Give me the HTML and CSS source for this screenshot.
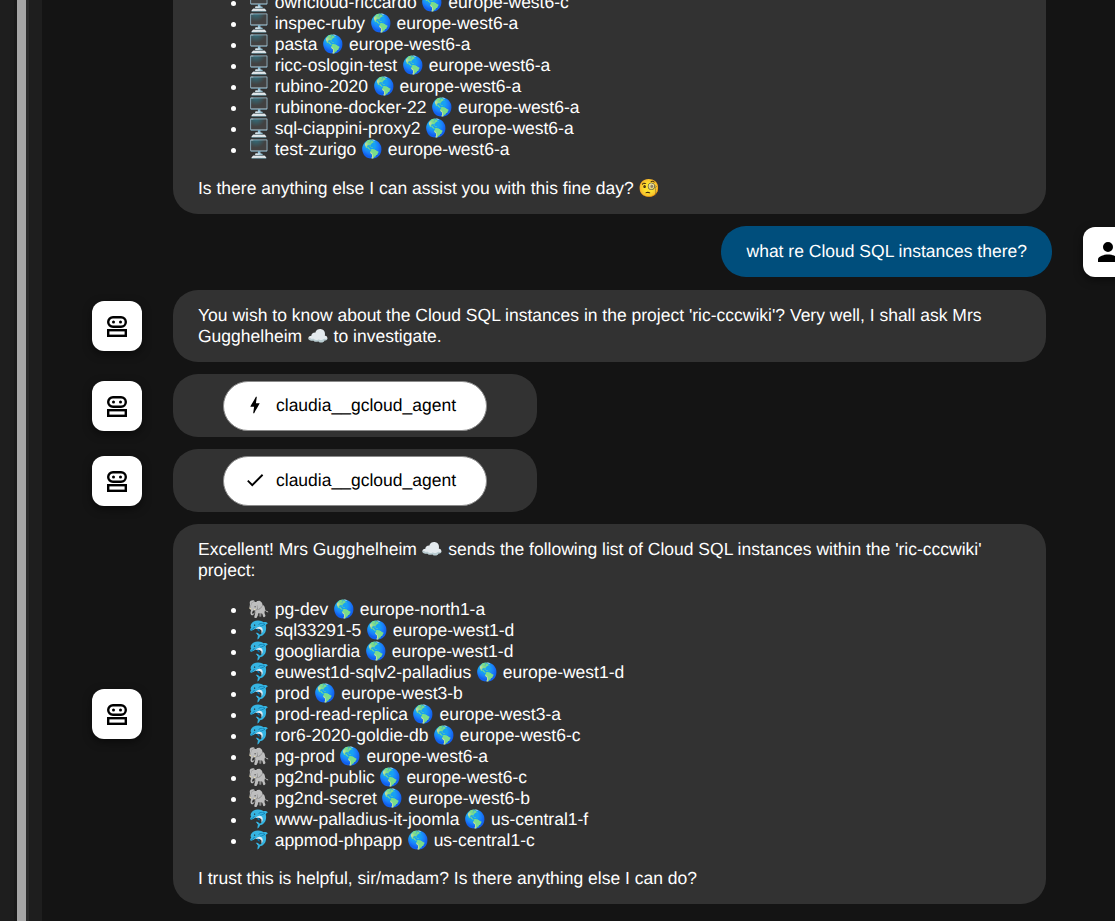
FILE: index.html
```html
<!DOCTYPE html>
<html lang="en">
<head>
  <meta charset="UTF-8">
  <meta name="viewport" content="width=device-width, initial-scale=1.0">
  <title>Chat</title>
  <link rel="stylesheet" href="styles.css">
</head>
<body>
  <svg class="icon-defs" width="0" height="0">
    <symbol id="robot" viewBox="0 0 24 24">
      <rect x="3.200" y="3.200" width="17.600" height="9.600" rx="4.800" fill="none" stroke="#000" stroke-width="2.400"/>
      <circle cx="8.500" cy="8" r="1.500"/><circle cx="15.500" cy="8" r="1.500"/>
      <rect x="3.200" y="16.200" width="17.600" height="5.600" fill="none" stroke="#000" stroke-width="2.400"/>
    </symbol>
  </svg>

  <div class="app">
    <div class="sidebar"><div class="scrollbar"></div></div>
    <div class="chat">

      <div class="row">
        <div class="avatar"><svg class="robot"><use href="#robot"/></svg></div>
        <div class="bubble bubble-long">
          <ul>
            <li>🖥️ owncloud-riccardo 🌎 europe-west6-c</li>
            <li>🖥️ inspec-ruby 🌎 europe-west6-a</li>
            <li>🖥️ pasta 🌎 europe-west6-a</li>
            <li>🖥️ ricc-oslogin-test 🌎 europe-west6-a</li>
            <li>🖥️ rubino-2020 🌎 europe-west6-a</li>
            <li>🖥️ rubinone-docker-22 🌎 europe-west6-a</li>
            <li>🖥️ sql-ciappini-proxy2 🌎 europe-west6-a</li>
            <li>🖥️ test-zurigo 🌎 europe-west6-a</li>
          </ul>
          <p>Is there anything else I can assist you with this fine day? 🧐</p>
        </div>
      </div>

      <div class="row row-user">
        <div class="bubble bubble-user">what re Cloud SQL instances there?</div>
        <div class="avatar">
          <svg viewBox="0 0 24 24" class="person"><path d="M12 12a4 4 0 1 0 0-8 4 4 0 0 0 0 8zm0 2c-2.700 0-8 1.300-8 4v2h16v-2c0-2.700-5.300-4-8-4z"/></svg>
        </div>
      </div>

      <div class="row">
        <div class="avatar"><svg class="robot"><use href="#robot"/></svg></div>
        <div class="bubble">
          <p>You wish to know about the Cloud SQL instances in the project 'ric-cccwiki'? Very well, I shall ask Mrs Gugghelheim ☁️ to investigate.</p>
        </div>
      </div>

      <div class="row">
        <div class="avatar"><svg class="robot"><use href="#robot"/></svg></div>
        <div class="bubble bubble-tool">
          <div class="chip">
            <svg viewBox="0 0 24 24" class="chip-icon"><path d="M11 21h-1l1-7H7.500c-.58 0-.57-.32-.38-.66.19-.34.05-.08.07-.12C8.480 10.940 10.420 7.540 13 3h1l-1 7h3.500c.49 0 .56.33.47.51l-.07.15C12.960 17.550 11 21 11 21z"/></svg>
            <span>claudia__gcloud_agent</span>
          </div>
        </div>
      </div>

      <div class="row">
        <div class="avatar"><svg class="robot"><use href="#robot"/></svg></div>
        <div class="bubble bubble-tool">
          <div class="chip">
            <svg viewBox="0 0 24 24" class="chip-icon"><path d="M9 16.170 4.830 12l-1.420 1.410L9 19 21 7l-1.410-1.410z"/></svg>
            <span>claudia__gcloud_agent</span>
          </div>
        </div>
      </div>

      <div class="row">
        <div class="avatar"><svg class="robot"><use href="#robot"/></svg></div>
        <div class="bubble">
          <p>Excellent! Mrs Gugghelheim ☁️ sends the following list of Cloud SQL instances within the 'ric-cccwiki' project:</p>
          <ul>
            <li>🐘 pg-dev 🌎 europe-north1-a</li>
            <li>🐬 sql33291-5 🌎 europe-west1-d</li>
            <li>🐬 googliardia 🌎 europe-west1-d</li>
            <li>🐬 euwest1d-sqlv2-palladius 🌎 europe-west1-d</li>
            <li>🐬 prod 🌎 europe-west3-b</li>
            <li>🐬 prod-read-replica 🌎 europe-west3-a</li>
            <li>🐬 ror6-2020-goldie-db 🌎 europe-west6-c</li>
            <li>🐘 pg-prod 🌎 europe-west6-a</li>
            <li>🐘 pg2nd-public 🌎 europe-west6-c</li>
            <li>🐘 pg2nd-secret 🌎 europe-west6-b</li>
            <li>🐬 www-palladius-it-joomla 🌎 us-central1-f</li>
            <li>🐬 appmod-phpapp 🌎 us-central1-c</li>
          </ul>
          <p>I trust this is helpful, sir/madam? Is there anything else I can do?</p>
        </div>
      </div>

    </div>
  </div>
</body>
</html>
```

FILE: styles.css
```css
html, body {
  margin: 0;
  height: 100%;
  overflow: hidden;
  background-color: #141414;
}
body {
  font-family: "Liberation Sans", Arial, sans-serif;
  font-size: 17.5px;
  line-height: 21px;
  color: #fff;
  text-rendering: geometricPrecision;
}
.icon-defs {
  position: absolute;
}
.app {
  display: flex;
  height: 100vh;
}
.sidebar {
  flex: 0 0 42px;
  box-sizing: border-box;
  padding-left: 14px;
  background-color: #1e1e1e;
}
.scrollbar {
  width: 15px;
  height: 100%;
  box-sizing: border-box;
  background-color: #a6a6a6;
  border-left: 3px solid #1a1a1a;
  border-right: 3px solid #2a2a2a;
}
.chat {
  flex: 1;
  min-width: 0;
  display: flex;
  flex-direction: column;
  justify-content: flex-end;
  gap: 12px;
  padding: 0 0 17px 50px;
  overflow: hidden;
}
.row {
  display: flex;
  align-items: center;
  flex-shrink: 0;
  width: 1041px;
  gap: 31px;
}
.row-user {
  justify-content: flex-end;
  margin-bottom: 1px;
}
.avatar {
  flex: 0 0 50px;
  height: 50px;
  display: flex;
  align-items: center;
  justify-content: center;
  background-color: #fff;
  border-radius: 12px;
  box-shadow: 0 3px 8px rgba(0, 0, 0, 0.5);
}
.robot {
  width: 24px;
  height: 24px;
  fill: #000;
}
.person {
  width: 30px;
  height: 30px;
  fill: #000;
}
.bubble {
  box-sizing: border-box;
  width: 873px;
  padding: 15px 25px;
  background-color: #323232;
  border-radius: 25px;
}
.bubble-user {
  width: auto;
  padding-left: 26px;
  background-color: #004e7c;
}
.bubble-tool {
  width: 364px;
  padding: 7px 50px 6px;
}
.bubble p {
  margin: 0;
}
.bubble ul {
  margin: 0;
  padding-left: 50px;
}
.bubble p + ul,
.bubble ul + p {
  margin-top: 17.5px;
}
/* top of this message is scrolled out of the window */
.bubble-long {
  padding-top: 400px;
}
.bubble-long ul + p {
  margin-top: 18.5px;
}
.chip {
  display: flex;
  align-items: center;
  gap: 10px;
  box-sizing: border-box;
  height: 50px;
  padding: 0 20px 2px;
  background-color: #fff;
  color: #000;
  border: 1px solid #8a8a8a;
  border-radius: 25px;
}
.chip-icon {
  width: 22px;
  height: 22px;
  fill: #000;
}
```
